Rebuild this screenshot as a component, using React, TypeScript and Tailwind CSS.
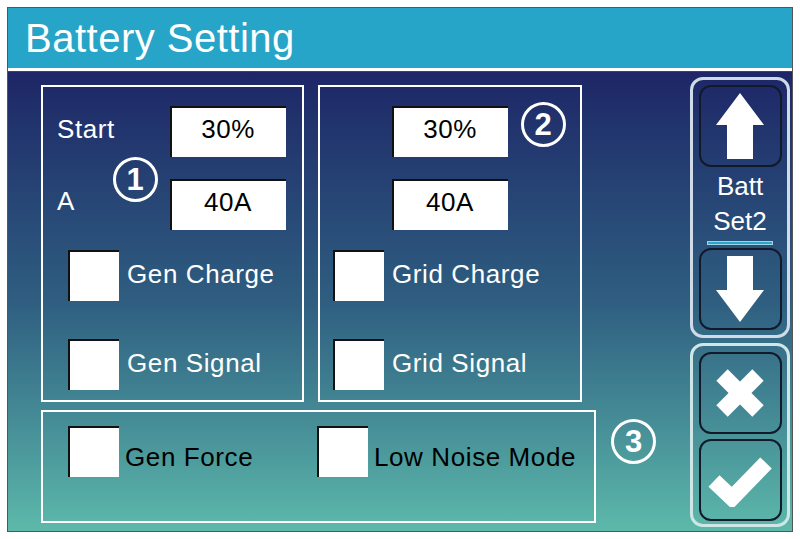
import React from 'react';

const font = { fontFamily: '"Liberation Sans", Arial, sans-serif' };

function ValueBox({ value }: { value: string }) {
    return (
        <div className="w-[116px] h-[51px] bg-white shadow-[inset_2px_2px_0_#111] flex items-center justify-center pb-[5px] text-black text-[26px] tracking-[0.5px]">
            {value}
        </div>
    );
}

function CheckBox() {
    return <div className="w-[51px] h-[51px] bg-white shadow-[inset_2px_2px_0_#111] shrink-0" />;
}

function Badge({ n }: { n: string }) {
    return (
        <div className="w-[45px] h-[45px] rounded-full border-[3px] border-white flex items-center justify-center text-white text-[31px] font-bold leading-none">
            {n}
        </div>
    );
}

function NavButton({ children }: { children: React.ReactNode }) {
    return (
        <div className="w-[83px] h-[82px] rounded-[12px] border-2 border-[#121a2a] flex items-center justify-center">
            {children}
        </div>
    );
}

export default function App() {
    return (
        <div className="w-[800px] h-[539px] bg-white pt-[7px] pl-[7px]" style={font}>
            <div className="w-[786px] h-[525px] border border-[#555] flex flex-col overflow-hidden">
                {/* header */}
                <div className="h-[60px] bg-[#27a5c8] flex items-center pl-[17px] shrink-0">
                    <span className="text-white text-[40px] tracking-[0.5px] leading-none">Battery Setting</span>
                </div>
                <div className="h-[3px] bg-white shrink-0" />
                <div className="h-px bg-[#444] shrink-0" />

                {/* body */}
                <div className="flex-1 flex bg-gradient-to-b from-[#1e2667] via-[#2f5e80] to-[#5db9aa]">
                    <div className="pl-[33px] pt-[13px] flex flex-col gap-[8px]">
                        <div className="flex gap-[14px]">
                            {/* panel 1 */}
                            <div className="relative w-[263px] h-[317px] border-2 border-white flex flex-col text-white text-[26px] tracking-[0.6px]">
                                <div className="flex items-center mt-[19px] h-[51px]">
                                    <span className="w-[127px] pl-[14px] pb-[5px]">Start</span>
                                    <ValueBox value="30%" />
                                </div>
                                <div className="flex items-center mt-[22px] h-[51px]">
                                    <span className="w-[127px] pl-[14px] pb-[6px]">A</span>
                                    <ValueBox value="40A" />
                                </div>
                                <div className="flex items-center mt-[20px] pl-[25px] gap-[8px]">
                                    <CheckBox />
                                    <span className="pb-[3px]">Gen Charge</span>
                                </div>
                                <div className="flex items-center mt-[38px] pl-[25px] gap-[8px]">
                                    <CheckBox />
                                    <span className="pb-[3px]">Gen Signal</span>
                                </div>
                                <div className="absolute left-[70px] top-[70px]">
                                    <Badge n="1" />
                                </div>
                            </div>

                            {/* panel 2 */}
                            <div className="relative w-[264px] h-[317px] border-2 border-white flex flex-col text-white text-[26px] tracking-[0.6px]">
                                <div className="flex items-center mt-[19px] h-[51px] pl-[72px]">
                                    <ValueBox value="30%" />
                                </div>
                                <div className="flex items-center mt-[22px] h-[51px] pl-[72px]">
                                    <ValueBox value="40A" />
                                </div>
                                <div className="flex items-center mt-[20px] pl-[13px] gap-[8px]">
                                    <CheckBox />
                                    <span className="pb-[3px]">Grid Charge</span>
                                </div>
                                <div className="flex items-center mt-[38px] pl-[13px] gap-[8px]">
                                    <CheckBox />
                                    <span className="pb-[3px]">Grid Signal</span>
                                </div>
                                <div className="absolute left-[201px] top-[15px]">
                                    <Badge n="2" />
                                </div>
                            </div>
                        </div>

                        {/* panel 3 */}
                        <div className="flex items-start">
                            <div className="w-[555px] h-[113px] border-2 border-white flex items-start pt-[14px] pl-[25px] text-black text-[26px] tracking-[0.6px]">
                                <div className="flex items-center gap-[6px] w-[249px]">
                                    <CheckBox />
                                    <span className="pt-[12px]">Gen Force</span>
                                </div>
                                <div className="flex items-center gap-[6px]">
                                    <CheckBox />
                                    <span className="pt-[12px]">Low Noise Mode</span>
                                </div>
                            </div>
                            <div className="ml-[15px] mt-[9px]">
                                <Badge n="3" />
                            </div>
                        </div>
                    </div>

                    {/* right column */}
                    <div className="ml-auto mr-[2px] pt-[5px] flex flex-col gap-[5px]">
                        <div className="w-[100px] h-[261px] rounded-[13px] border-[3px] border-[#cfdbe6] flex flex-col items-center pt-[5px]">
                            <NavButton>
                                <svg width="48" height="66" viewBox="0 0 48 66">
                                    <polygon points="24,0 48,32 37,32 37,66 11,66 11,32 0,32" fill="white" />
                                </svg>
                            </NavButton>
                            <div className="text-white text-[26px] leading-[35px] text-center mt-[2px]">
                                <div>Batt</div>
                                <div>Set2</div>
                            </div>
                            <div className="w-[66px] h-[4px] bg-[#29a7c9] border border-[#9fd3e6] mt-[2px] mb-[3px]" />
                            <NavButton>
                                <svg width="48" height="66" viewBox="0 0 48 66">
                                    <polygon points="24,66 48,34 37,34 37,0 11,0 11,34 0,34" fill="white" />
                                </svg>
                            </NavButton>
                        </div>
                        <div className="w-[100px] h-[184px] rounded-[13px] border-[3px] border-[#cfe6e6] flex flex-col items-center pt-[6px] gap-[5px]">
                            <NavButton>
                                <svg width="52" height="52" viewBox="0 0 52 52">
                                    <line x1="8" y1="8" x2="44" y2="44" stroke="white" strokeWidth="16" />
                                    <line x1="44" y1="8" x2="8" y2="44" stroke="white" strokeWidth="16" />
                                </svg>
                            </NavButton>
                            <NavButton>
                                <svg width="66" height="54" viewBox="0 0 66 54">
                                    <polyline points="7,28 25,45 59,10" fill="none" stroke="white" strokeWidth="16" strokeLinejoin="miter" />
                                </svg>
                            </NavButton>
                        </div>
                    </div>
                </div>
            </div>
        </div>
    );
}
